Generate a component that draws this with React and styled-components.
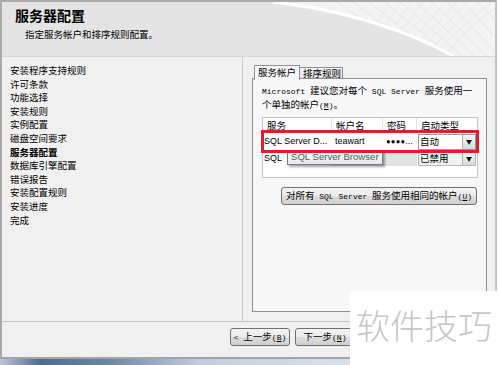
import React from "react";
import styled, { createGlobalStyle } from "styled-components";

const GlobalStyle = createGlobalStyle`
  html, body {
    margin: 0;
    padding: 0;
    background: #ffffff;
  }
  body {
    width: 500px;
    height: 365px;
    overflow: hidden;
    font-family: "Noto Sans CJK SC", sans-serif;
    color: #000;
  }
`;

const Screen = styled.div`
  position: relative;
  width: 500px;
  height: 365px;
  display: flex;
  flex-direction: column;
`;

const Window = styled.div`
  width: 497px;
  height: 359px;
  box-sizing: border-box;
  display: flex;
  flex-direction: column;
  border-top: 2px solid #a9a9a9;
  border-left: 2px solid #a9a9a9;
  border-right: 2px solid #c4c4c4;
  border-bottom: 2px solid #a4a4a4;
  background: #f0f0f0;
`;

const Header = styled.header`
  position: relative;
  flex: none;
  height: 55px;
  box-sizing: border-box;
  padding: 4px 0 0 13px;
  background: #e4e4e4;
  border-bottom: 1px solid #d4d4d4;
  overflow: hidden;
`;

const Swoosh = styled.svg`
  position: absolute;
  top: 0;
  right: 0;
`;

const Title = styled.h1`
  position: relative;
  margin: 0;
  font-size: 14px;
  line-height: 18px;
  font-weight: bold;
`;

const Subtitle = styled.p`
  position: relative;
  margin: 4px 0 0 10px;
  font-size: 9.5px;
  line-height: 13px;
`;

const Body = styled.div`
  flex: none;
  height: 264px;
  display: flex;
  border-bottom: 1px solid #c2c2c2;
`;

const Nav = styled.ul`
  flex: none;
  width: 241px;
  margin: 0;
  padding: 7px 0 0 8px;
  box-sizing: border-box;
  list-style: none;
  border-right: 1px solid #c9c9c9;
`;

const NavItem = styled.li`
  font-size: 9.5px;
  line-height: 13.6px;
  font-weight: ${(p) => (p.$active ? "bold" : "normal")};
`;

const Content = styled.div`
  flex: 1;
  display: flex;
  flex-direction: column;
  padding: 7px 7px 0 9px;
`;

const Tabs = styled.div`
  display: flex;
  align-items: flex-end;
  height: 15px;
  padding-left: 2px;
  position: relative;
  z-index: 1;
`;

const Tab = styled.div`
  box-sizing: border-box;
  width: ${(p) => p.$w}px;
  height: ${(p) => (p.$active ? 15 : 12)}px;
  margin-bottom: ${(p) => (p.$active ? -1 : 0)}px;
  padding-left: 3px;
  border: 1px solid #8d9099;
  border-bottom: ${(p) => (p.$active ? "none" : "1px solid #8d9099")};
  border-left: ${(p) => (p.$first ? "1px solid #8d9099" : "none")};
  background: ${(p) =>
    p.$active ? "#f7f7f7" : "linear-gradient(#f2f2f2, #e3e3e3)"};
  font-size: 9.5px;
  line-height: ${(p) => (p.$active ? 13 : 10)}px;
`;

const Panel = styled.div`
  box-sizing: border-box;
  width: 235px;
  height: 234px;
  margin-top: -1px;
  padding: 5px 8px 0 9px;
  display: flex;
  flex-direction: column;
  border: 1px solid #8d9099;
  background: #f7f7f7;
`;

const Intro = styled.p`
  margin: 0;
  font-size: 9.5px;
  line-height: 13px;
  white-space: nowrap;
`;

const Mono = styled.span`
  font-family: "Liberation Mono", monospace;
  font-size: 8px;
`;

const Key = styled.span`
  text-decoration: underline;
`;

const Table = styled.div`
  margin-top: 5px;
  width: 216px;
  box-sizing: border-box;
  border: 1px solid #c3c3c3;
  background: #ffffff;
  display: flex;
  flex-direction: column;
`;

const Row = styled.div`
  position: relative;
  display: grid;
  grid-template-columns: 69px 51px 34px 60px;
  height: ${(p) => p.$h}px;
  outline: ${(p) => (p.$marked ? "3px solid #dc1f2b" : "none")};
  outline-offset: -1px;
  z-index: ${(p) => (p.$marked ? 2 : 1)};
`;

const HeadCell = styled.div`
  padding-left: 4px;
  font-size: 9.5px;
  line-height: 14px;
  border-right: 1px solid #e6e6e6;
  &:last-child {
    border-right: none;
  }
`;

const Cell = styled.div`
  overflow: hidden;
  white-space: nowrap;
  padding-left: ${(p) => p.$pad ?? 3}px;
  font-family: "Liberation Sans", "Noto Sans CJK SC", sans-serif;
  font-size: 9px;
  line-height: ${(p) => p.$lh}px;
  background: ${(p) => (p.$disabled ? "#e2e2e2" : "#ffffff")};
  display: flex;
  align-items: center;
`;

const Dots = styled.span`
  font-size: 7.5px;
  letter-spacing: 0.3px;
`;

const Combo = styled.div`
  flex: 1;
  display: flex;
  align-items: stretch;
  height: ${(p) => p.$h}px;
  margin: 0 1px;
  box-sizing: border-box;
  border: 1px solid ${(p) => (p.$disabled ? "#b8b8b8" : "#9a9a9a")};
  background: ${(p) => (p.$disabled ? "#f0f0f0" : "#ffffff")};
  font-family: "Noto Sans CJK SC", sans-serif;
  font-size: 9.5px;
`;

const ComboText = styled.span`
  flex: 1;
  padding-left: 1px;
  display: flex;
  align-items: center;
`;

const Arrow = styled.span`
  width: 12px;
  display: flex;
  align-items: center;
  justify-content: center;
  border-left: 1px solid #b0b0b0;
  background: linear-gradient(#f4f4f4, #d9d9d9);
  font-size: 6px;
  color: #111;
`;

const Tooltip = styled.div`
  position: absolute;
  left: 24px;
  top: -2px;
  width: 96px;
  height: 16px;
  box-sizing: border-box;
  padding-left: 3px;
  border: 1px solid #7a7a7a;
  background: linear-gradient(#ffffff, #e6e7ee);
  box-shadow: 2px 2px 2px rgba(0, 0, 0, 0.35);
  font-family: "Liberation Sans", sans-serif;
  font-size: 9.6px;
  line-height: 14px;
  color: #575757;
  white-space: nowrap;
`;

const Filler = styled.div`
  height: 11px;
`;

const Button = styled.button`
  box-sizing: border-box;
  width: ${(p) => p.$w}px;
  height: 18px;
  padding: 0;
  border: 1px solid #707070;
  border-radius: 3px;
  background: linear-gradient(#f2f2f2 0%, #ebebeb 50%, #dddddd 51%, #cfcfcf 100%);
  font-family: "Noto Sans CJK SC", sans-serif;
  font-size: 9.5px;
  line-height: 15px;
  color: #000;
  white-space: nowrap;
`;

const SameAccount = styled(Button)`
  align-self: flex-end;
  margin-top: 9px;
  margin-right: 1px;
`;

const Footer = styled.footer`
  flex: 1;
  display: flex;
  align-items: flex-start;
  gap: 5px;
  padding: 6px 0 0 228px;
`;

const Taskbar = styled.div`
  flex: 1;
  background: linear-gradient(
    90deg,
    #b9c9da 0%,
    #4f6b8d 8%,
    #6d87a6 22%,
    #bfcfe0 40%,
    #d6e2ee 70%,
    #e2ebf4 100%
  );
`;

const Watermark = styled.div`
  position: absolute;
  left: 350px;
  top: 291px;
  width: 150px;
  height: 74px;
  box-sizing: border-box;
  padding: 17px 0 0 6px;
  background: #ffffff;
  font-family: "Noto Sans CJK SC", sans-serif;
  font-size: 34px;
  line-height: 34px;
  font-weight: 300;
  color: #c6c6c6;
  white-space: nowrap;
`;

const steps = [
  "安装程序支持规则",
  "许可条款",
  "功能选择",
  "安装规则",
  "实例配置",
  "磁盘空间要求",
  "服务器配置",
  "数据库引擎配置",
  "错误报告",
  "安装配置规则",
  "安装进度",
  "完成",
];

const HeaderArt = () => (
  <Swoosh width="225" height="54" viewBox="0 0 225 54">
    <defs>
      <clipPath id="swoosh">
        <path d="M3 0 C 60 6, 130 24, 183 54 L225 54 L225 0 Z" />
      </clipPath>
    </defs>
    <path d="M3 0 C 60 6, 130 24, 183 54 L225 54 L225 0 Z" fill="#f3f3f3" />
    <g clipPath="url(#swoosh)" fill="none" strokeWidth="0.6">
      {[0, 1, 2, 3, 4, 5, 6, 7, 8, 9, 10].map((i) => (
        <path
          key={"a" + i}
          d={`M${60 + i * 16} -5 Q ${110 + i * 14} 30, ${150 + i * 12} 60`}
          stroke="#dcdcdc"
        />
      ))}
      {[0, 1, 2, 3, 4, 5, 6, 7, 8, 9, 10].map((i) => (
        <path
          key={"b" + i}
          d={`M${240 - i * 12} -5 Q ${190 - i * 8} 30, ${170 - i * 10} 60`}
          stroke="#e2e2e2"
        />
      ))}
    </g>
    <path
      d="M3 0 C 60 6, 130 24, 183 54"
      fill="none"
      stroke="#ffffff"
      strokeWidth="3"
    />
  </Swoosh>
);

export default function App() {
  return (
    <Screen>
      <GlobalStyle />
      <Window>
        <Header>
          <HeaderArt />
          <Title>服务器配置</Title>
          <Subtitle>指定服务帐户和排序规则配置。</Subtitle>
        </Header>
        <Body>
          <Nav>
            {steps.map((s) => (
              <NavItem key={s} $active={s === "服务器配置"}>
                {s}
              </NavItem>
            ))}
          </Nav>
          <Content>
            <Tabs>
              <Tab $w={46} $active $first>
                服务帐户
              </Tab>
              <Tab $w={43}>排序规则</Tab>
            </Tabs>
            <Panel>
              <Intro>
                <Mono>Microsoft </Mono>建议您对每个<Mono> SQL Server </Mono>
                服务使用一
                <br />
                个单独的帐户
                <Mono>
                  (<Key>M</Key>)
                </Mono>
                。
              </Intro>
              <Table>
                <Row $h={14}>
                  <HeadCell>服务</HeadCell>
                  <HeadCell>帐户名</HeadCell>
                  <HeadCell>密码</HeadCell>
                  <HeadCell>启动类型</HeadCell>
                </Row>
                <Row $h={19} $marked>
                  <Cell $pad={1} $lh={19}>
                    SQL Server D...
                  </Cell>
                  <Cell $lh={19}>teawart</Cell>
                  <Cell $lh={19}>
                    <Dots>●●●●</Dots>...
                  </Cell>
                  <Cell $pad={0} $lh={19}>
                    <Combo $h={16}>
                      <ComboText>自动</ComboText>
                      <Arrow>▼</Arrow>
                    </Combo>
                  </Cell>
                </Row>
                <Row $h={15}>
                  <Cell $pad={1} $lh={15}>
                    SQL
                  </Cell>
                  <Cell $disabled $lh={15} />
                  <Cell $disabled $lh={15} />
                  <Cell $pad={0} $lh={15}>
                    <Combo $h={14} $disabled>
                      <ComboText>已禁用</ComboText>
                      <Arrow>▼</Arrow>
                    </Combo>
                  </Cell>
                  <Tooltip>SQL Server Browser</Tooltip>
                </Row>
                <Filler />
              </Table>
              <SameAccount $w={196}>
                对所有<Mono> SQL Server </Mono>服务使用相同的帐户
                <Mono>
                  (<Key>U</Key>)
                </Mono>
              </SameAccount>
            </Panel>
          </Content>
        </Body>
        <Footer>
          <Button $w={60}>
            <Mono>&lt; </Mono>上一步
            <Mono>
              (<Key>B</Key>)
            </Mono>
          </Button>
          <Button $w={60}>
            下一步
            <Mono>
              (<Key>N</Key>)
            </Mono>
          </Button>
        </Footer>
      </Window>
      <Taskbar />
      <Watermark>软件技巧</Watermark>
    </Screen>
  );
}
